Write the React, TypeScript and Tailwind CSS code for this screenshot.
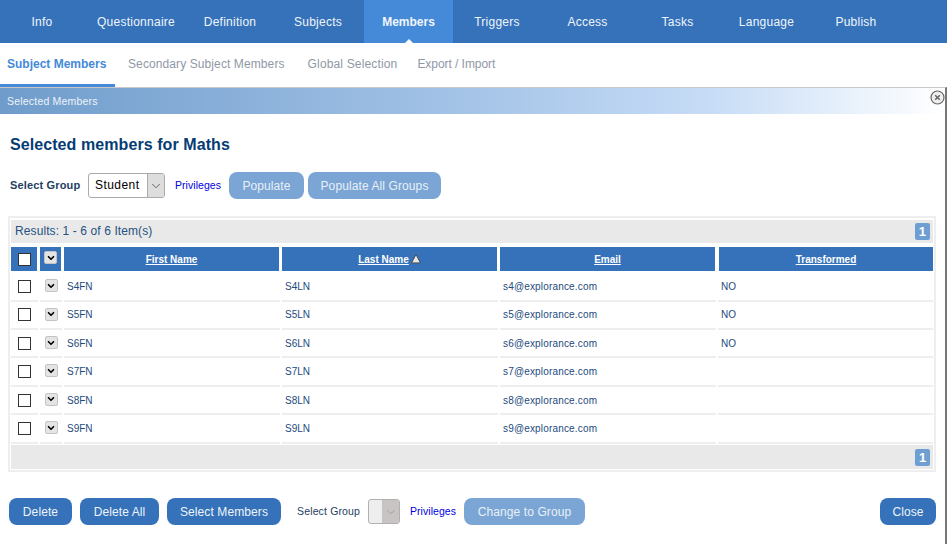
import React from 'react';
import { ChevronDown } from 'lucide-react';

const tabs = [
  { label: 'Info', w: 'w-[84px]' },
  { label: 'Questionnaire', w: 'w-[104px]' },
  { label: 'Definition', w: 'w-[84px]' },
  { label: 'Subjects', w: 'w-[92px]' },
  { label: 'Members', w: 'w-[89px]', active: true },
  { label: 'Triggers', w: 'w-[88px]' },
  { label: 'Access', w: 'w-[93px]' },
  { label: 'Tasks', w: 'w-[87px]' },
  { label: 'Language', w: 'w-[91px]' },
  { label: 'Publish', w: 'w-[88px]' },
];

const rows = [
  { first: 'S4FN', last: 'S4LN', email: 's4@explorance.com', transformed: 'NO' },
  { first: 'S5FN', last: 'S5LN', email: 's5@explorance.com', transformed: 'NO' },
  { first: 'S6FN', last: 'S6LN', email: 's6@explorance.com', transformed: 'NO' },
  { first: 'S7FN', last: 'S7LN', email: 's7@explorance.com', transformed: '' },
  { first: 'S8FN', last: 'S8LN', email: 's8@explorance.com', transformed: '' },
  { first: 'S9FN', last: 'S9LN', email: 's9@explorance.com', transformed: '' },
];

function Box() {
  return <span className="block w-[13px] h-[13px] border border-[#333] bg-white" />;
}

function MiniDrop() {
  return (
    <span className="flex items-center justify-center w-[13px] h-[13px] rounded-[2px] border border-[#c4c4c4] bg-[#e4e4e4]">
      <ChevronDown className="w-[10px] h-[10px] text-black" strokeWidth={4} />
    </span>
  );
}

function Btn({ children, light, w }: { children: React.ReactNode; light?: boolean; w: string }) {
  return (
    <button className={`${w} h-[27px] rounded-[8px] text-[12px] tracking-[0.1px] text-center ${light ? 'bg-[#7ba5d4] text-[#e8f0f8]' : 'bg-[#3572b9] text-[#eef4fa]'}`}>
      {children}
    </button>
  );
}

function PageBadge() {
  return (
    <span className="flex items-center justify-center w-[15px] h-[17px] rounded-[2px] bg-[#6f9fd2] text-white text-[13px] font-bold">1</span>
  );
}

export default function App() {
  return (
    <div className="w-[947px] h-[544px] overflow-hidden bg-white font-['Liberation_Sans',sans-serif]">
      <div className="flex h-[43px] bg-[#3572b9] text-[12px] text-[#f0f5fb]">
        {tabs.map((t) => (
          <div
            key={t.label}
            className={`relative flex items-center justify-center ${t.w} ${t.active ? 'bg-[#448ad9] font-bold' : 'tracking-[0.25px]'}`}
          >
            {t.label}
            {t.active && (
              <span className="absolute bottom-0 left-[41px] w-0 h-0 border-x-[4px] border-x-transparent border-b-[4px] border-b-white" />
            )}
          </div>
        ))}
      </div>

      <div className="flex h-[44px] items-start text-[12px] text-[#8f98a6]">
        <div className="w-[115px] h-[44px] pl-[7px] pt-[12px] border-b-[3px] border-[#448ad9] font-bold text-[#448ad9]">Subject Members</div>
        <div className="ml-[13px] pt-[12px] tracking-[0.1px]">Secondary Subject Members</div>
        <div className="ml-[23px] pt-[12px] tracking-[0.15px]">Global Selection</div>
        <div className="ml-[20px] pt-[12px] tracking-[-0.05px]">Export / Import</div>
      </div>

      <div className="h-[457px] border-t border-[#c9c9c9] border-r-2 border-r-[#777]">
        <div className="relative flex items-center h-[26px] pl-[7px] pt-[1px] text-[10.5px] tracking-[0.2px] text-[#eef3f9] bg-[linear-gradient(90deg,#6f9ccb_0%,#a5c4e8_50%,#c6dcf6_75%,#ffffff_100%)]">
          Selected Members
          <svg className="absolute right-0 top-[2px] w-[15px] h-[15px]" viewBox="0 0 15 15" fill="none" stroke="#666">
            <circle cx="7.5" cy="7.5" r="6.5" strokeWidth="1.2" fill="#eeeeee" />
            <path d="M5.2 5.2l4.6 4.6M9.8 5.2l-4.6 4.6" strokeWidth="1.5" />
          </svg>
        </div>

        <h1 className="mt-[22px] ml-[10px] h-[18px] text-[16px] leading-[18px] tracking-[0.08px] font-bold text-[#063c74]">Selected members for Maths</h1>

        <div className="flex items-center mt-[18px] ml-[10px] h-[27px]">
          <span className="text-[11px] font-bold tracking-[0.15px] text-[#24405f] w-[78px]">Select Group</span>
          <div className="flex w-[77px] h-[25px] rounded-[3px] border border-[#aaa] overflow-hidden">
            <span className="flex-1 pl-[6px] text-[12px] tracking-[0.45px] leading-[23px] text-black">Student</span>
            <span className="flex items-center justify-center w-[17px] bg-[#ddd] border-l border-[#aaa]">
              <ChevronDown className="w-[14px] h-[14px] text-[#555]" strokeWidth={1.5} />
            </span>
          </div>
          <a className="ml-[10px] w-[54px] text-[10.5px] tracking-[0.05px] text-[#0000e0]">Privileges</a>
          <div className="flex gap-[4px]">
            <Btn light w="w-[75px]">Populate</Btn>
            <Btn light w="w-[133px]">Populate All Groups</Btn>
          </div>
        </div>

        <div className="mt-[17px] ml-[8px] w-[928px] h-[256px] border-2 border-[#eee] px-[1px] pt-[2px] text-[#1d4a7d]">
          <div className="flex items-center justify-between h-[23px] pl-[4px] pr-[3px] bg-[#e9e9e9] text-[12px] tracking-[0.1px] text-[#26527f]">
            <span className="pb-[2px]">Results: 1 - 6 of 6 Item(s)</span>
            <PageBadge />
          </div>

          <div className="flex gap-[3px] mt-[4px] h-[24px] text-[10px] font-bold text-white bg-white">
            <div className="flex items-center justify-center w-[26px] pl-[1px] bg-[#3572b9]"><Box /></div>
            <div className="flex justify-center pt-[4px] w-[21px] bg-[#3572b9]"><MiniDrop /></div>
            <div className="flex items-center justify-center w-[215px] bg-[#3572b9] underline">First Name</div>
            <div className="flex items-center justify-center w-[215px] bg-[#3572b9]">
              <span className="underline">Last Name</span>
              <svg className="ml-[2px] w-[10px] h-[10px]" viewBox="0 0 9 9"><path d="M4.5 0.5L8.5 8H0.5z" fill="#e8e8e8" stroke="#444" strokeWidth="0.8" /></svg>
            </div>
            <div className="flex items-center justify-center w-[215px] bg-[#3572b9] underline">Email</div>
            <div className="flex items-center justify-center ml-[1px] w-[214px] bg-[#3572b9] underline">Transformed</div>
          </div>

          <div className="pt-[2.3px]">
            {rows.map((r) => (
              <div key={r.first} className="flex gap-[2px] h-[28.4px] text-[10px] text-[#1d4a7d]">
                <div className="flex items-center justify-center w-[27px] border-b-2 border-[#eee]"><Box /></div>
                <div className="flex justify-center w-[22px] border-b-2 border-[#eee]"><span className="mt-[6px]"><MiniDrop /></span></div>
                <div className="flex items-center w-[216px] pl-[3px] border-b-2 border-[#eee]">{r.first}</div>
                <div className="flex items-center w-[216px] pl-[3px] border-b-2 border-[#eee]">{r.last}</div>
                <div className="flex items-center w-[216px] pl-[3px] border-b-2 border-[#eee] tracking-[0.17px]">{r.email}</div>
                <div className="flex items-center w-[215px] pl-[3px] border-b-2 border-[#eee]">{r.transformed}</div>
              </div>
            ))}
          </div>

          <div className="flex items-center justify-end h-[24px] mt-[1.7px] pr-[3px] bg-[#e9e9e9]">
            <PageBadge />
          </div>
        </div>

        <div className="flex items-center mt-[26px] ml-[9px] w-[927px] h-[27px]">
          <Btn w="w-[63px]">Delete</Btn>
          <span className="w-[8px]" />
          <Btn w="w-[79px]">Delete All</Btn>
          <span className="w-[8px]" />
          <Btn w="w-[114px]">Select Members</Btn>
          <span className="ml-[16px] w-[71px] text-[10.5px] tracking-[0.15px] text-[#24405f]">Select Group</span>
          <div className="flex w-[32px] h-[25px] rounded-[3px] border border-[#b5b0b0] overflow-hidden bg-[#eee]">
            <span className="flex-1" />
            <span className="flex items-center justify-center w-[17px] bg-[#c8c4c4]">
              <ChevronDown className="w-[14px] h-[14px] text-[#999]" strokeWidth={1.5} />
            </span>
          </div>
          <a className="ml-[10px] w-[54px] text-[10.5px] tracking-[0.05px] text-[#0000e0]">Privileges</a>
          <Btn light w="w-[121px]">Change to Group</Btn>
          <div className="flex-1" />
          <Btn w="w-[56px]">Close</Btn>
        </div>
      </div>
    </div>
  );
}
